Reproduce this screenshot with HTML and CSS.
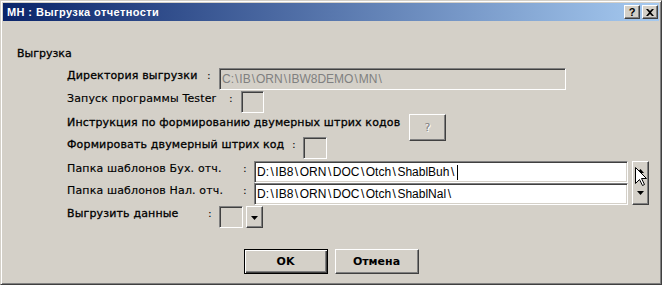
FILE: index.html
```html
<!DOCTYPE html>
<html lang="ru">
<head>
<meta charset="utf-8">
<title>МН : Выгрузка отчетности</title>
<link rel="stylesheet" href="styles.css">
</head>
<body>
<div class="window">
  <div class="titlebar">
    <span class="title">МН : Выгрузка отчетности</span>
    <div class="tbtns">
      <span class="tbtn">?</span>
      <span class="tbtn tx"><svg width="8" height="7" viewBox="0 0 8 7"><path d="M0 0h2l2 2 2-2h2L5 3.5 8 7H6L4 5 2 7H0l3-3.5z" fill="#000"/></svg></span>
    </div>
  </div>
  <div class="client">
    <div class="group b">Выгрузка</div>
    <div class="rows">
      <div class="row r1">
        <span class="lbl b" style="width:140px">Директория выгрузки</span><span class="colon c12">:</span>
        <div class="field disabled w347">C:<i>\</i>IB<i>\</i>ORN<i>\</i>IBW8DEMO<i>\</i>MN<i>\</i></div>
      </div>
      <div class="row r2">
        <span class="lbl" style="width:162px">Запуск программы Tester</span><span class="colon c12">:</span>
        <div class="box"></div>
      </div>
      <div class="row r3">
        <span class="lbl b" style="width:342px">Инструкция по формированию двумерных штрих кодов</span>
        <div class="qbtn"><span>?</span></div>
      </div>
      <div class="row r4">
        <span class="lbl b" style="width:225px">Формировать двумерный штрих код</span><span class="colon c11">:</span>
        <div class="box w24"></div>
      </div>
      <div class="pair">
        <div class="pcol">
          <div class="row r5">
            <span class="lbl" style="width:176px">Папка шаблонов Бух. отч.</span><span class="colon c11">:</span>
            <div class="field w374">D:<i>\</i>IB8<i>\</i>ORN<i>\</i>DOC<i>\</i>Otch<i>\</i>ShablBuh<i>\</i><span class="caret"></span></div>
          </div>
          <div class="row r6">
            <span class="lbl" style="width:176px">Папка шаблонов Нал. отч.</span><span class="colon c11">:</span>
            <div class="field w374">D:<i>\</i>IB8<i>\</i>ORN<i>\</i>DOC<i>\</i>Otch<i>\</i>ShablNal<i>\</i></div>
          </div>
        </div>
        <div class="spin">
          <svg class="up" width="7" height="4" viewBox="0 0 7 4"><path d="M3.5 0L7 4H0z" fill="#000"/></svg>
          <svg class="down" width="7" height="4" viewBox="0 0 7 4"><path d="M0 0h7L3.5 4z" fill="#000"/></svg>
        </div>
      </div>
      <div class="row r7">
        <span class="lbl b" style="width:141px">Выгрузить данные</span><span class="colon c11">:</span>
        <div class="box w24"></div>
        <div class="ddbtn"><svg width="7" height="4" viewBox="0 0 7 4"><path d="M0 0h7L3.5 4z" fill="#000"/></svg></div>
      </div>
    </div>
    <div class="buttons">
      <div class="btn default"><span>OK</span></div>
      <div class="btn"><span>Отмена</span></div>
    </div>
  </div>
  <svg class="cursor" width="13" height="20" viewBox="0 0 13 20"><path d="M0.5 0.5V16.5L4.5 12.5L7.5 18.5L9.5 17.5L6.5 11.5H11.5Z" fill="#fff" stroke="#000" stroke-width="1" stroke-linejoin="miter"/></svg>
</div>
</body>
</html>
```

FILE: styles.css
```css
* { box-sizing: border-box; margin: 0; padding: 0; }
body {
  margin: 0;
  width: 662px;
  height: 285px;
  overflow: hidden;
  background: #d4d0c8;
  font-family: "DejaVu Sans", "Liberation Sans", sans-serif;
  font-size: 11px;
  color: #000;
}
.window {
  position: relative;
  width: 662px;
  height: 285px;
  background: #d4d0c8;
  border: 1px solid;
  border-color: #d4d0c8 #404040 #404040 #d4d0c8;
  box-shadow: inset 1px 1px #fff, inset -1px -1px #808080;
  padding: 2px;
}
.titlebar {
  height: 18px;
  display: flex;
  align-items: center;
  justify-content: space-between;
  padding: 0 1px 0 4px;
  background: linear-gradient(to right, #0a246a, #a6caf0);
}
.title {
  color: #fff;
  font-family: "Liberation Sans", Arial, sans-serif;
  font-weight: bold;
  font-size: 11px;
  letter-spacing: 0.4px;
  line-height: 13px;
}
.tbtns { display: flex; gap: 2px; }
.tbtn {
  width: 16px;
  height: 14px;
  background: #d4d0c8;
  border: 1px solid;
  border-color: #fff #404040 #404040 #fff;
  box-shadow: inset -1px -1px #808080;
  display: flex;
  align-items: center;
  justify-content: center;
  font-family: "Liberation Sans", Arial, sans-serif;
  font-weight: bold;
  font-size: 11px;
  line-height: 12px;
}
.client { padding-top: 26px; }
.group {
  margin-left: 14px;
  line-height: 13px;
}
.b { -webkit-text-stroke: 0.3px #000; }
.rows { margin-top: 8px; margin-left: 64px; }
.row { display: flex; align-items: flex-start; }
.r1 { height: 23px; }
.r2 { height: 24px; }
.r3 { height: 22px; }
.r4 { height: 24px; }
.r5 { height: 22px; }
.r6 { height: 23px; }
.r7 { height: 22px; }
.lbl {
  display: inline-block;
  line-height: 13px;
  padding-top: 1px;
  white-space: nowrap;
  letter-spacing: 0.15px;
  -webkit-text-stroke: 0.15px #000;
  flex: none;
}
.lbl.b { -webkit-text-stroke: 0.3px #000; }
.colon {
  display: inline-block;
  line-height: 13px;
  padding-top: 1px;
  flex: none;
}
.c12 { width: 12px; }
.c11 { width: 11px; }
.field {
  height: 22px;
  background: #fff;
  border: 1px solid;
  border-color: #808080 #fff #fff #808080;
  box-shadow: inset 1px 1px #404040, inset -1px -1px #d4d0c8;
  padding-left: 2px;
  line-height: 20px;
  white-space: nowrap;
  overflow: hidden;
  font-family: "Liberation Sans", Arial, sans-serif;
  font-size: 12px;
  display: flex;
  align-items: center;
}
.field i { font-style: normal; padding: 0 1.5px; }
.field.disabled { background: #d4d0c8; color: #808080; }
.field.disabled i { padding: 0 1px; }
.w347 { width: 347px; }
.w374 { width: 374px; }
.caret { width: 1px; height: 15px; background: #000; margin-left: 1px; }
.box {
  width: 23px;
  height: 22px;
  border: 1px solid;
  border-color: #808080 #fff #fff #808080;
  box-shadow: inset 1px 1px #404040, inset -1px -1px #d4d0c8;
  flex: none;
}
.w24 { width: 24px; }
.qbtn {
  width: 37px;
  height: 27px;
  margin-top: -1px;
  border: 1px solid;
  border-color: #fff #404040 #404040 #fff;
  box-shadow: inset -1px -1px #808080;
  display: flex;
  align-items: center;
  justify-content: center;
  color: #808080;
  text-shadow: 1px 1px #fff;
  font-size: 11px;
  flex: none;
}
.pair { display: flex; align-items: flex-start; }
.spin {
  width: 17px;
  height: 44px;
  margin-left: 4px;
  border: 1px solid;
  border-color: #fff #404040 #404040 #fff;
  box-shadow: inset -1px -1px #808080;
  display: flex;
  flex-direction: column;
  align-items: center;
  justify-content: space-between;
  padding: 7px 0 9px 0;
}
.ddbtn {
  width: 17px;
  height: 22px;
  margin-left: 3px;
  border: 1px solid;
  border-color: #fff #404040 #404040 #fff;
  box-shadow: inset -1px -1px #808080;
  display: flex;
  align-items: center;
  justify-content: center;
  padding-top: 1px;
}
.ddbtn svg, .spin svg { display: block; }
.buttons {
  margin-top: 21px;
  display: flex;
  justify-content: center;
  gap: 7px;
}
.btn {
  width: 84px;
  height: 25px;
  border: 1px solid;
  border-color: #fff #404040 #404040 #fff;
  box-shadow: inset -1px -1px #808080;
  display: flex;
  align-items: center;
  justify-content: center;
  font-weight: bold;
  font-size: 11px;
}
.btn.default {
  border: 1px solid #000;
  box-shadow: inset 1px 1px #fff, inset -1px -1px #404040, inset -2px -2px #808080;
}
.cursor { position: absolute; left: 634px; top: 166px; }
```
